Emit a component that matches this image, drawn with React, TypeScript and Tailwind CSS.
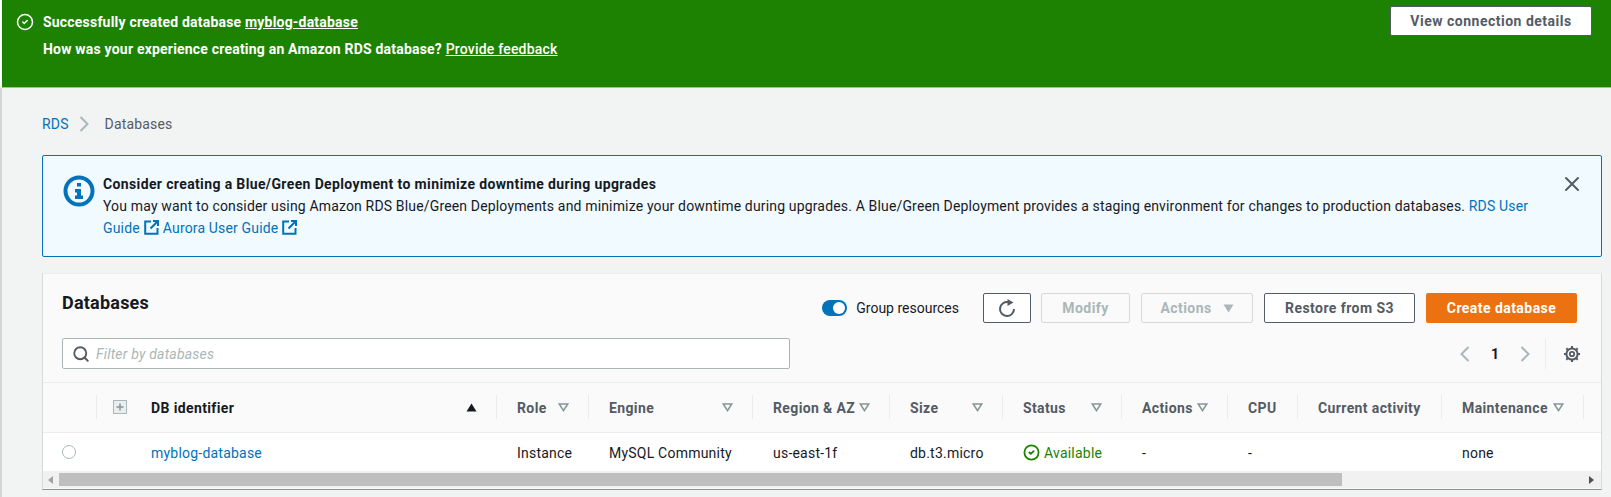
import { Search, X, CircleCheck } from 'lucide-react';

interface Column {
  label: string;
  width: string;
  filter?: boolean;
}

const COLUMNS: Column[] = [
  { label: 'Role', width: 'w-[92px]', filter: true },
  { label: 'Engine', width: 'w-[164px]', filter: true },
  { label: 'Region & AZ', width: 'w-[137px]', filter: true },
  { label: 'Size', width: 'w-[113px]', filter: true },
  { label: 'Status', width: 'w-[119px]', filter: true },
  { label: 'Actions', width: 'w-[106px]', filter: true },
  { label: 'CPU', width: 'w-[70px]' },
  { label: 'Current activity', width: 'w-[144px]' },
  { label: 'Maintenance', width: 'w-[142px]', filter: true },
];

function FilterCaret() {
  return (
    <svg width="11" height="9" viewBox="0 0 11 9" className="shrink-0">
      <path d="M1.2 1h8.6L5.5 7.6z" fill="none" stroke="#879596" strokeWidth="1.6" />
    </svg>
  );
}

function ExternalIcon() {
  return (
    <svg width="15" height="15" viewBox="0 0 15 15" className="mx-[4px] inline-block align-[-2px]">
      <path d="M7 1.5H1.2v12.3h12.3V8" fill="none" stroke="#0073bb" strokeWidth="2" />
      <path d="M9 1h5v5M14 1L6.5 8.5" fill="none" stroke="#0073bb" strokeWidth="2" />
    </svg>
  );
}

function Chevron({ left }: { left?: boolean }) {
  return (
    <svg width="10" height="16" viewBox="0 0 10 16" className="shrink-0">
      <path d={left ? 'M8.5 1L1.5 8l7 7' : 'M1.5 1l7 7-7 7'} fill="none" stroke="#aab7b8" strokeWidth="2" />
    </svg>
  );
}

function HeaderCell({ col }: { col: Column }) {
  return (
    <th className={`${col.width} p-0 text-left font-bold`}>
      <div className="flex h-6 items-center justify-between border-r border-[#eaeded] pl-5 pr-[19px] text-[#545b64]">
        <span className="whitespace-nowrap pt-[2px] tracking-[0.38px]">{col.label}</span>
        {col.filter && <FilterCaret />}
      </div>
    </th>
  );
}

export default function App() {
  return (
    <div className="h-[497px] w-[1611px] overflow-hidden bg-white font-['Roboto',sans-serif] text-sm tracking-[0.16px] text-[#16191f]">
      <div className="ml-[2px] flex h-[88px] items-start justify-between overflow-hidden border-b border-[#aab7b8] bg-[#1d8102] font-bold tracking-[0.2px] text-white">
        <div className="flex pl-[14px] pt-[9px]">
          <CircleCheck size={18} strokeWidth={2} className="mt-[4px] mr-[9px]" />
          <div className="leading-[27px]">
            <div>
              Successfully created database <span className="underline">myblog-database</span>
            </div>
            <div>
              How was your experience creating an Amazon RDS database?{' '}
              <span className="font-medium underline">Provide feedback</span>
            </div>
          </div>
        </div>
        <div className="flex">
          <div className="mt-[6px] flex h-[30px] w-[202px] items-center justify-center rounded-[2px] border border-[#545b64] bg-white tracking-[0.5px] text-[#545b64]">
            View connection details
          </div>
          <X size={16} className="mt-[12px] ml-[18px] mr-[-15px] shrink-0 text-[#d5dbdb]" />
        </div>
      </div>

      <div className="h-[409px] border-l-2 border-[#d5d5d5] bg-[#f2f3f3] pl-[40px] pr-[9px]">
        <div className="flex h-[67px] items-center pt-[4px] text-[#545b64]">
          <span className="text-[#0073bb]">RDS</span>
          <span className="ml-[10px] mr-[16px]">
            <Chevron />
          </span>
          <span>Databases</span>
        </div>

        <div className="flex h-[102px] rounded-[2px] border border-[#0073bb] bg-[#f1faff] pl-[20px] pt-[17px]">
          <svg width="32" height="32" viewBox="0 0 32 32" className="mt-[2px] mr-[8px] shrink-0">
            <circle cx="16" cy="16" r="13.5" fill="none" stroke="#0073bb" strokeWidth="4" />
            <path d="M14 8h4v3.5h-4zM12 14h6v6.5h2V24h-8v-3.5h2v-3h-2z" fill="#0073bb" />
          </svg>
          <div className="w-[1430px] leading-[22px]">
            <div className="font-bold tracking-[0.37px]">
              Consider creating a Blue/Green Deployment to minimize downtime during upgrades
            </div>
            <div>
              You may want to consider using Amazon RDS Blue/Green Deployments and minimize your downtime during
              upgrades. A Blue/Green Deployment provides a staging environment for changes to production databases.{' '}
              <span className="text-[#0073bb]">RDS User</span>{' '}
              <span className="text-[#0073bb]">
                Guide
                <ExternalIcon />
              </span>
              <span className="text-[#0073bb]">
                Aurora User Guide
                <ExternalIcon />
              </span>
            </div>
          </div>
          <X size={24} strokeWidth={2} className="mt-[-1px] ml-[27px] shrink-0 text-[#545b64]" />
        </div>

        <div className="mt-[16px] h-[217px] overflow-hidden border border-t-[#eaeded] border-x-[#d5dbdb] border-b-[#879596] bg-[#fafafa]">
          <div className="flex h-[109px] border-b border-[#eaeded] pl-[19px] pr-[24px]">
            <div className="w-[728px] shrink-0">
              <div className="h-[64px] pt-[15px] text-lg font-bold leading-[28px] tracking-[0.22px]">Databases</div>
              <div className="flex h-[31px] items-center rounded-[2px] border border-[#aab7b8] bg-white pl-[9px]">
                <Search size={18} strokeWidth={2.5} className="mr-[6px] text-[#545b64]" />
                <span className="italic tracking-[0.2px] text-[#aab7b8]">Filter by databases</span>
              </div>
            </div>
            <div className="flex-1">
              <div className="flex h-[64px] items-start justify-end pt-[19px] font-bold tracking-[0.45px]">
                <div className="mt-[7px] mr-[9px] flex h-4 w-[25px] items-center justify-end rounded-full bg-[#0073bb] pr-[2px]">
                  <div className="size-3 rounded-full bg-white" />
                </div>
                <span className="mt-[5px] mr-[24px] whitespace-nowrap font-normal tracking-normal">Group resources</span>
                <div className="mr-[10px] flex h-[30px] w-[48px] items-center justify-center rounded-[2px] border border-[#545b64] bg-white">
                  <svg width="20" height="20" viewBox="0 0 20 20">
                    <path d="M11.5 4.2A7 7 0 1 0 17 11" fill="none" stroke="#545b64" strokeWidth="2" />
                    <path d="M10.5 1l6 3.6-6 3.4z" fill="#545b64" />
                  </svg>
                </div>
                <div className="mr-[11px] flex h-[30px] w-[89px] items-center justify-center rounded-[2px] border border-[#d5dbdb] text-[#aab7b8]">
                  Modify
                </div>
                <div className="mr-[11px] flex h-[30px] w-[112px] items-center justify-center gap-[11px] rounded-[2px] border border-[#d5dbdb] text-[#aab7b8]">
                  Actions
                  <svg width="11" height="9" viewBox="0 0 11 9">
                    <path d="M0.5 0.5h10L5.5 8.5z" fill="#aab7b8" />
                  </svg>
                </div>
                <div className="mr-[11px] flex h-[30px] w-[151px] items-center justify-center rounded-[2px] border border-[#545b64] bg-white text-[#545b64]">
                  Restore from S3
                </div>
                <div className="flex h-[30px] w-[151px] items-center justify-center rounded-[2px] bg-[#ec7211] text-white">
                  Create database
                </div>
              </div>
              <div className="mr-[-3px] flex h-[31px] items-center justify-end">
                <Chevron left />
                <span className="ml-[21px] w-[8px] font-bold">1</span>
                <span className="ml-[21px]">
                  <Chevron />
                </span>
                <div className="ml-[15px] mr-[18px] h-[30px] border-r border-[#eaeded]" />
                <svg width="16" height="16" viewBox="0 0 16 16">
                  <circle cx="8" cy="8" r="5.6" fill="none" stroke="#545b64" strokeWidth="2" />
                  <circle cx="8" cy="8" r="2.2" fill="none" stroke="#545b64" strokeWidth="1.8" />
                  <path
                    d="M8 0v2.5M8 13.5V16M0 8h2.5M13.5 8H16M2.3 2.3l1.8 1.8M11.9 11.9l1.8 1.8M13.7 2.3l-1.8 1.8M4.1 11.9l-1.8 1.8"
                    stroke="#545b64"
                    strokeWidth="2"
                  />
                </svg>
              </div>
            </div>
          </div>

          <table className="w-[1560px] table-fixed border-collapse">
            <thead>
              <tr className="h-[49px] border-b border-[#eaeded]">
                <th className="w-[54px] p-0">
                  <div className="h-6 border-r border-[#eaeded]" />
                </th>
                <th className="w-[400px] p-0 text-left font-bold">
                  <div className="flex h-6 items-center border-r border-[#eaeded] pl-[16px] pr-[19px]">
                    <svg width="14" height="14" viewBox="0 0 14 14" className="mr-[24px] shrink-0">
                      <rect x="0.5" y="0.5" width="13" height="13" fill="#eaeded" stroke="#aab7b8" />
                      <path d="M7 3.5v7M3.5 7h7" stroke="#879596" strokeWidth="1.5" />
                    </svg>
                    <span className="flex-1 pt-[2px] tracking-[0.38px]">DB identifier</span>
                    <svg width="11" height="9" viewBox="0 0 11 9">
                      <path d="M0.5 8.5h10L5.5 0.5z" fill="#16191f" />
                    </svg>
                  </div>
                </th>
                {COLUMNS.map((col) => (
                  <HeaderCell key={col.label} col={col} />
                ))}
                <th className="w-[19px] p-0" />
              </tr>
            </thead>
            <tbody>
              <tr className="h-[39px] bg-white tracking-[0.22px]">
                <td className="p-0 pl-[19px]">
                  <div className="size-[14px] rounded-full border border-[#aab7b8] bg-white" />
                </td>
                <td className="p-0 pl-[54px] pt-[2px] text-[#0073bb]">myblog-database</td>
                <td className="p-0 pl-5 pt-[2px]">Instance</td>
                <td className="p-0 pl-5 pt-[2px]">MySQL Community</td>
                <td className="p-0 pl-5 pt-[2px]">us-east-1f</td>
                <td className="p-0 pl-5 pt-[2px]">db.t3.micro</td>
                <td className="p-0 pl-5 pt-[2px] text-[#1d8102]">
                  <div className="flex items-center gap-[4px]">
                    <CircleCheck size={17} strokeWidth={2.5} />
                    Available
                  </div>
                </td>
                <td className="p-0 pl-5 pt-[2px]">-</td>
                <td className="p-0 pl-5 pt-[2px]">-</td>
                <td className="p-0" />
                <td className="p-0 pl-5 pt-[2px]">none</td>
                <td className="p-0" />
              </tr>
            </tbody>
          </table>

          <div className="flex h-[17px] items-center bg-[#f1f1f1] px-[1px]">
            <svg width="6" height="8" viewBox="0 0 6 8" className="ml-[4px] mr-[5px]">
              <path d="M5 0v8L0 4z" fill="#a3a3a3" />
            </svg>
            <div className="h-[13px] w-[1283px] bg-[#bfbfbf]" />
            <svg width="6" height="8" viewBox="0 0 6 8" className="ml-auto mr-[5px]">
              <path d="M0 0v8l5-4z" fill="#505050" />
            </svg>
          </div>
        </div>
      </div>
    </div>
  );
}
